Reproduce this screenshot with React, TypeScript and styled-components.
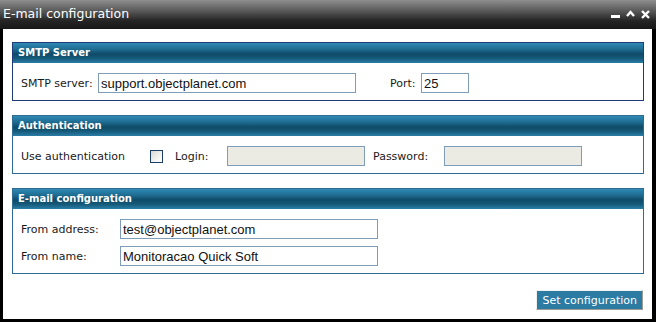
import React from 'react'
import styled, { createGlobalStyle } from 'styled-components'

const GlobalStyle = createGlobalStyle`
  html, body {
    margin: 0;
    padding: 0;
    background: #000;
  }
  * {
    box-sizing: border-box;
  }
`

const Window = styled.div`
  width: 656px;
  height: 322px;
  background: #000;
  display: flex;
  flex-direction: column;
  font-family: 'DejaVu Sans', Verdana, sans-serif;
`

const TitleBar = styled.div`
  height: 29px;
  display: flex;
  align-items: flex-start;
  justify-content: space-between;
  background: linear-gradient(to bottom, #8e8e8e 0%, #555 40%, #242424 72%, #181818 100%);
`

const Title = styled.div`
  color: #fff;
  font-size: 12.5px;
  line-height: 14px;
  padding: 7px 0 0 3px;
`

const Controls = styled.div`
  display: flex;
  align-items: flex-start;
  padding: 10px 6px 0 0;
`

const Body = styled.div`
  flex: 1;
  margin: 0 4px 3px 3px;
  background: #fff;
  padding: 13px 8px 0 9px;
  display: flex;
  flex-direction: column;
`

const Panel = styled.div<{ $border: string; $mt?: number }>`
  border: 1px solid ${(props) => props.$border};
  margin-top: ${(props) => props.$mt || 0}px;
`

const PanelHeader = styled.div`
  height: 20px;
  line-height: 20px;
  padding-left: 5px;
  color: #fff;
  font-size: 10px;
  font-weight: bold;
  background: linear-gradient(to bottom, #2f8ab4 0%, #1f6d93 30%, #0f4b68 55%, #155877 75%, #2a7ea7 100%);
`

const Row = styled.div`
  display: flex;
  align-items: center;
  padding: 10px 8px 7px;
`

const Grid = styled.div`
  display: grid;
  grid-template-columns: 99px 258px;
  row-gap: 7px;
  align-items: center;
  padding: 10px 8px 7px;
`

const Label = styled.span<{ $ml?: number; $w?: number }>`
  font-size: 11px;
  color: #1a1a1a;
  margin-left: ${(props) => props.$ml || 0}px;
  width: ${(props) => (props.$w ? `${props.$w}px` : 'auto')};
  white-space: nowrap;
`

const Input = styled.input<{ $w: number; $ml?: number }>`
  width: ${(props) => props.$w}px;
  height: 20px;
  margin: 0 0 0 ${(props) => props.$ml || 0}px;
  padding: 0 2px;
  border: 1px solid #7f9db9;
  background: #fff;
  font-family: 'Liberation Sans', Arial, sans-serif;
  font-size: 13px;
  color: #111;
  outline: none;
  &:disabled {
    background: #ebebe4;
  }
`

const Check = styled.span<{ $ml: number }>`
  display: inline-block;
  width: 13px;
  height: 13px;
  margin-left: ${(props) => props.$ml}px;
  border: 1px solid #1d3f66;
  background: linear-gradient(135deg, #d8d8d2 0%, #f4f4f2 60%, #fff 100%);
`

const Footer = styled.div`
  display: flex;
  justify-content: flex-end;
  padding: 16px 1px 0 0;
`

const Button = styled.button`
  height: 20px;
  padding: 0 5px;
  background: #2b7ba3;
  color: #fff;
  font-family: 'DejaVu Sans', Verdana, sans-serif;
  font-size: 11px;
  border: 1px solid;
  border-color: #f0f0ee #9d9d95 #9d9d95 #f0f0ee;
  cursor: pointer;
`

const Icon = styled.svg<{ $ml?: number }>`
  display: block;
  margin-left: ${(props) => props.$ml || 0}px;
`

export default function App() {
  return (
    <>
      <GlobalStyle />
      <Window>
        <TitleBar>
          <Title>E-mail configuration</Title>
          <Controls>
            <Icon width='9' height='9' viewBox='0 0 9 9'>
              <rect x='0' y='5' width='9' height='3' fill='#fff' />
            </Icon>
            <Icon $ml={6} width='9' height='9' viewBox='0 0 9 9'>
              <path d='M1 6 L4.5 2 L8 6' stroke='#fff' strokeWidth='2.4' fill='none' />
            </Icon>
            <Icon $ml={6} width='9' height='9' viewBox='0 0 9 9'>
              <path d='M1 1 L8 8 M8 1 L1 8' stroke='#fff' strokeWidth='2.4' fill='none' />
            </Icon>
          </Controls>
        </TitleBar>
        <Body>
          <Panel $border='#1f3c78'>
            <PanelHeader>SMTP Server</PanelHeader>
            <Row>
              <Label $w={77}>SMTP server:</Label>
              <Input $w={258} defaultValue='support.objectplanet.com' />
              <Label $ml={34} $w={31}>Port:</Label>
              <Input $w={48} defaultValue='25' />
            </Row>
          </Panel>
          <Panel $border='#2e6c93' $mt={14}>
            <PanelHeader>Authentication</PanelHeader>
            <Row>
              <Label $w={129}>Use authentication</Label>
              <Check $ml={0} />
              <Label $ml={12} $w={52}>Login:</Label>
              <Input $w={138} disabled />
              <Label $ml={8} $w={71}>Password:</Label>
              <Input $w={138} disabled />
            </Row>
          </Panel>
          <Panel $border='#2e6c93' $mt={14}>
            <PanelHeader>E-mail configuration</PanelHeader>
            <Grid>
              <Label>From address:</Label>
              <Input $w={258} defaultValue='test@objectplanet.com' />
              <Label>From name:</Label>
              <Input $w={258} defaultValue='Monitoracao Quick Soft' />
            </Grid>
          </Panel>
          <Footer>
            <Button>Set configuration</Button>
          </Footer>
        </Body>
      </Window>
    </>
  )
}
